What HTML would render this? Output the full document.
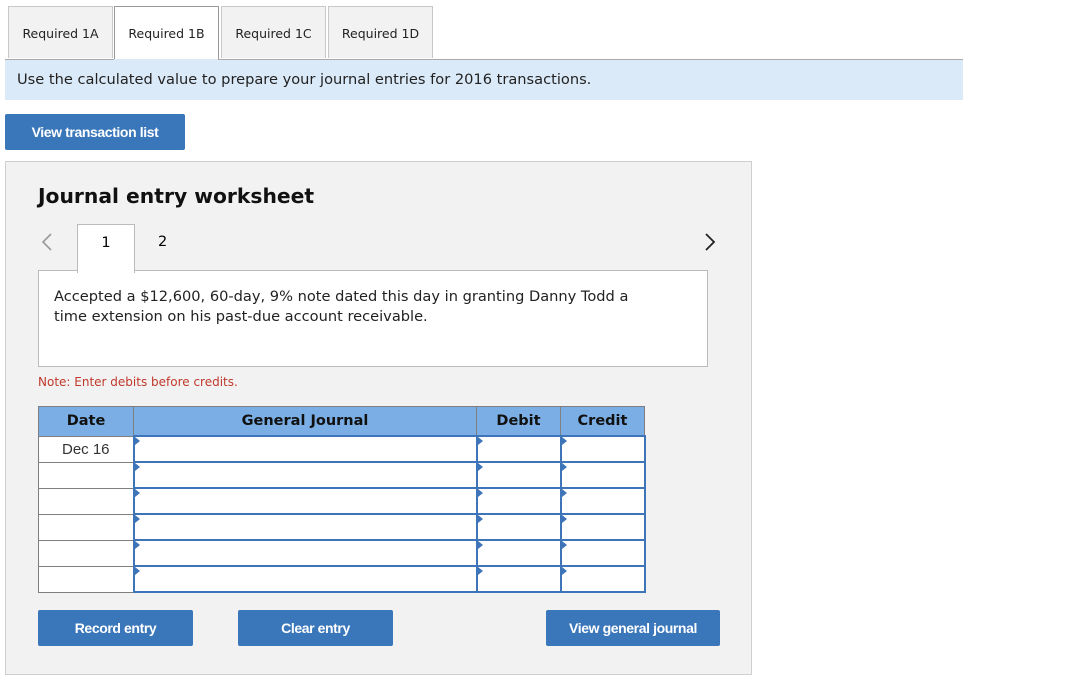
<!DOCTYPE html>
<html><head><style>
body{margin:0;width:1083px;height:697px;background:#fff;font-family:"DejaVu Sans","Liberation Sans",sans-serif;position:relative;overflow:hidden}
.a{position:absolute}
.tab{position:absolute;top:6px;height:52px;border:1px solid #c8c8c8;border-bottom:none;background:#f2f2f2;font-size:12.5px;color:#222;text-align:center;line-height:54px;box-sizing:border-box}
.btn{position:absolute;background:#3a76ba;color:#fff;font-family:"Liberation Sans",sans-serif;font-weight:bold;font-size:14px;text-align:center;border-radius:2px;letter-spacing:-0.4px}
table{border-collapse:collapse;position:absolute;left:38px;top:406px}
td,th{padding:0;height:24px;border:1px solid #7f7f7f;font-size:14.5px}
th{background:#7aaee4;color:#111;font-family:"DejaVu Sans",sans-serif;height:28px;font-size:14.5px}
td.i{border:2px solid #3e74b8;position:relative;background:#fff}
td.i:before{content:"";position:absolute;left:0;top:0;border-left:5px solid #3e74b8;border-top:4px solid transparent;border-bottom:4px solid transparent}
</style></head><body>
<div class="tab" style="left:8px;width:105px">Required 1A</div>
<div class="tab" style="left:114px;width:105px;background:#fff;border-color:#999;height:54px">Required 1B</div>
<div class="tab" style="left:221px;width:105px">Required 1C</div>
<div class="tab" style="left:328px;width:105px">Required 1D</div>
<div class="a" style="left:5px;top:59px;width:958px;height:1px;background:#aaa"></div>
<div class="a" style="left:114px;top:59px;width:104px;height:1px;background:#dbeaf8"></div>
<div class="a" style="left:5px;top:60px;width:958px;height:40px;background:#dbeaf8;font-size:14.6px;line-height:40px;color:#222"><span style="padding-left:12px">Use the calculated value to prepare your journal entries for 2016 transactions.</span></div>
<div class="btn" style="left:5px;top:114px;width:180px;height:36px;line-height:36px">View transaction list</div>
<div class="a" style="left:5px;top:161px;width:745px;height:512px;background:#f2f2f2;border:1px solid #cfcfcf"></div>
<div class="a" style="left:38px;top:184px;font-size:20.3px;font-weight:bold;color:#111">Journal entry worksheet</div>
<svg class="a" style="left:40px;top:233px" width="14" height="18"><path d="M11 1 L3 9 L11 17" fill="none" stroke="#999" stroke-width="1.6"/></svg>
<svg class="a" style="left:703px;top:233px" width="14" height="18"><path d="M3 1 L11 9 L3 17" fill="none" stroke="#222" stroke-width="1.8"/></svg>
<div class="a" style="left:77px;top:224px;width:56px;height:48px;background:#fff;border:1px solid #bbb;border-bottom:none;text-align:center;line-height:36px;font-size:14.5px;z-index:2">1</div>
<div class="a" style="left:158px;top:224px;line-height:36px;font-size:14.5px">2</div>
<div class="a" style="left:38px;top:270px;width:668px;height:95px;background:#fff;border:1px solid #bbb"></div>
<div class="a" style="left:54px;top:287px;width:600px;font-size:14.6px;line-height:20px;color:#222">Accepted a $12,600, 60-day, 9% note dated this day in granting Danny Todd a<br>time extension on his past-due account receivable.</div>
<div class="a" style="left:38px;top:375px;font-size:12px;color:#c0392b">Note: Enter debits before credits.</div>
<table>
<tr><th style="width:94px">Date</th><th style="width:342px">General Journal</th><th style="width:83px">Debit</th><th style="width:83px">Credit</th></tr>
<tr><td style="text-align:center;background:#fff;font-family:'Liberation Sans',sans-serif;color:#333;font-size:15px">Dec 16</td><td class="i"></td><td class="i"></td><td class="i"></td></tr>
<tr><td style="background:#fff"></td><td class="i"></td><td class="i"></td><td class="i"></td></tr>
<tr><td style="background:#fff"></td><td class="i"></td><td class="i"></td><td class="i"></td></tr>
<tr><td style="background:#fff"></td><td class="i"></td><td class="i"></td><td class="i"></td></tr>
<tr><td style="background:#fff"></td><td class="i"></td><td class="i"></td><td class="i"></td></tr>
<tr><td style="background:#fff"></td><td class="i"></td><td class="i"></td><td class="i"></td></tr>
</table>
<div class="btn" style="left:38px;top:610px;width:155px;height:36px;line-height:36px">Record entry</div>
<div class="btn" style="left:238px;top:610px;width:155px;height:36px;line-height:36px">Clear entry</div>
<div class="btn" style="left:546px;top:610px;width:174px;height:36px;line-height:36px">View general journal</div>
</body></html>
